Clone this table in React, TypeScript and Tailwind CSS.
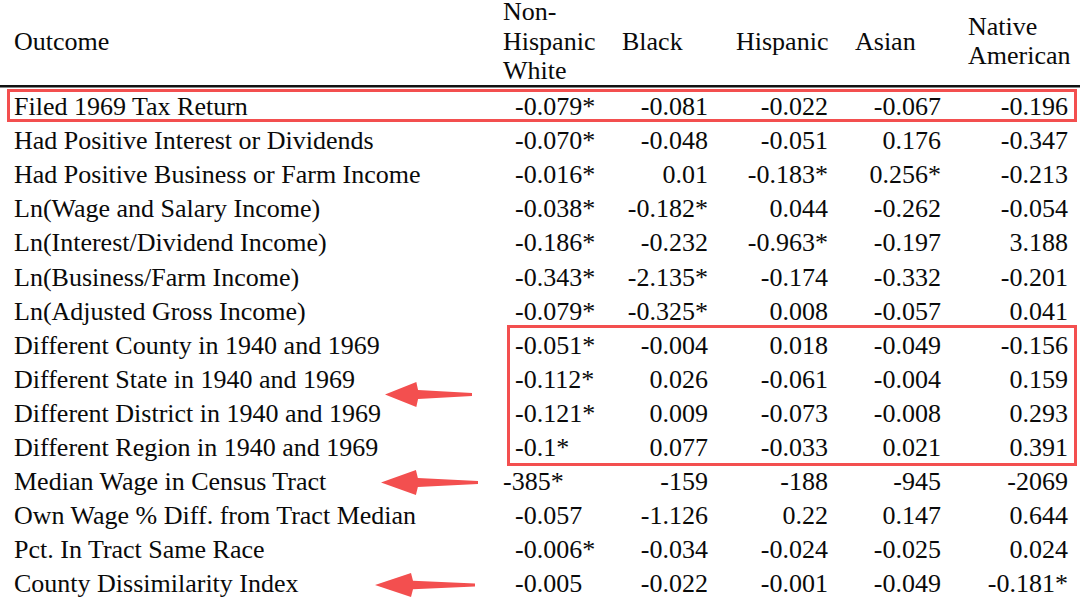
import React from 'react'

type Row = {
    label: string
    values: string[]
    firstTight?: boolean
}

const rows: Row[] = [
    { label: 'Filed 1969 Tax Return', values: ['-0.079*', '-0.081', '-0.022', '-0.067', '-0.196'] },
    { label: 'Had Positive Interest or Dividends', values: ['-0.070*', '-0.048', '-0.051', '0.176', '-0.347'] },
    { label: 'Had Positive Business or Farm Income', values: ['-0.016*', '0.01', '-0.183*', '0.256*', '-0.213'] },
    { label: 'Ln(Wage and Salary Income)', values: ['-0.038*', '-0.182*', '0.044', '-0.262', '-0.054'] },
    { label: 'Ln(Interest/Dividend Income)', values: ['-0.186*', '-0.232', '-0.963*', '-0.197', '3.188'] },
    { label: 'Ln(Business/Farm Income)', values: ['-0.343*', '-2.135*', '-0.174', '-0.332', '-0.201'] },
    { label: 'Ln(Adjusted Gross Income)', values: ['-0.079*', '-0.325*', '0.008', '-0.057', '0.041'] },
    { label: 'Different County in 1940 and 1969', values: ['-0.051*', '-0.004', '0.018', '-0.049', '-0.156'] },
    { label: 'Different State in 1940 and 1969', values: ['-0.112*', '0.026', '-0.061', '-0.004', '0.159'] },
    { label: 'Different District in 1940 and 1969', values: ['-0.121*', '0.009', '-0.073', '-0.008', '0.293'] },
    { label: 'Different Region in 1940 and 1969', values: ['-0.1*', '0.077', '-0.033', '0.021', '0.391'] },
    { label: 'Median Wage in Census Tract', values: ['-385*', '-159', '-188', '-945', '-2069'], firstTight: true },
    { label: 'Own Wage % Diff. from Tract Median', values: ['-0.057', '-1.126', '0.22', '0.147', '0.644'] },
    { label: 'Pct. In Tract Same Race', values: ['-0.006*', '-0.034', '-0.024', '-0.025', '0.024'] },
    { label: 'County Dissimilarity Index', values: ['-0.005', '-0.022', '-0.001', '-0.049', '-0.181*'] },
]

const cols = 'grid grid-cols-[503px_109px_108px_120px_113px_127px]'

// red pointer drawn over the table
function Arrow({ className }: { className: string }) {
    return (
        <svg className={className} viewBox="0 0 100 25" preserveAspectRatio="none" xmlns="http://www.w3.org/2000/svg">
            <polygon points="0,12.5 36,0 38,8 100,11 100,14 38,17 36,25" fill="#f34f4f" />
        </svg>
    )
}

export default function App() {
    return (
        <div className="relative w-[1080px] h-[598px] overflow-hidden bg-white text-[#0a0a0a] text-[26px] [font-family:'Liberation_Serif','Times_New_Roman',serif]">
            {/* header */}
            <div className={`${cols} -mt-[3px] h-[88px] items-center leading-[29.5px]`}>
                <div className="pl-[14px]">Outcome</div>
                <div>Non-<br />Hispanic<br />White</div>
                <div className="pl-[10px]">Black</div>
                <div className="pl-[16px]">Hispanic</div>
                <div className="pl-[15px]">Asian</div>
                <div className="pl-[15px]">Native<br />American</div>
            </div>
            <div className="h-[2px] bg-[#111]"></div>
            <div className="h-[1px] bg-[#888]"></div>

            <div className="flex flex-col">
                {rows.map((row) => (
                    <div key={row.label} className={`${cols} h-[34.1px] pt-[4px] items-center leading-none`}>
                        <div className="pl-[14px] whitespace-nowrap">{row.label}</div>
                        <div className={row.firstTight ? 'pl-0' : 'pl-[12px]'}>{row.values[0]}</div>
                        {row.values.slice(1).map((v, i) => (
                            <div key={i} className="text-right pr-[12px]">{v}</div>
                        ))}
                    </div>
                ))}
            </div>

            {/* highlight boxes */}
            <div className="absolute left-[7px] top-[89px] w-[1070px] h-[33px] border-[3px] border-[#f34f4f]"></div>
            <div className="absolute left-[507px] top-[325px] w-[570px] h-[141px] border-[3px] border-[#f34f4f]"></div>

            <Arrow className="absolute left-[385px] top-[382px] w-[87px] h-[25px]" />
            <Arrow className="absolute left-[381px] top-[470px] w-[97px] h-[25px]" />
            <Arrow className="absolute left-[375px] top-[573px] w-[100px] h-[24px]" />
        </div>
    )
}
